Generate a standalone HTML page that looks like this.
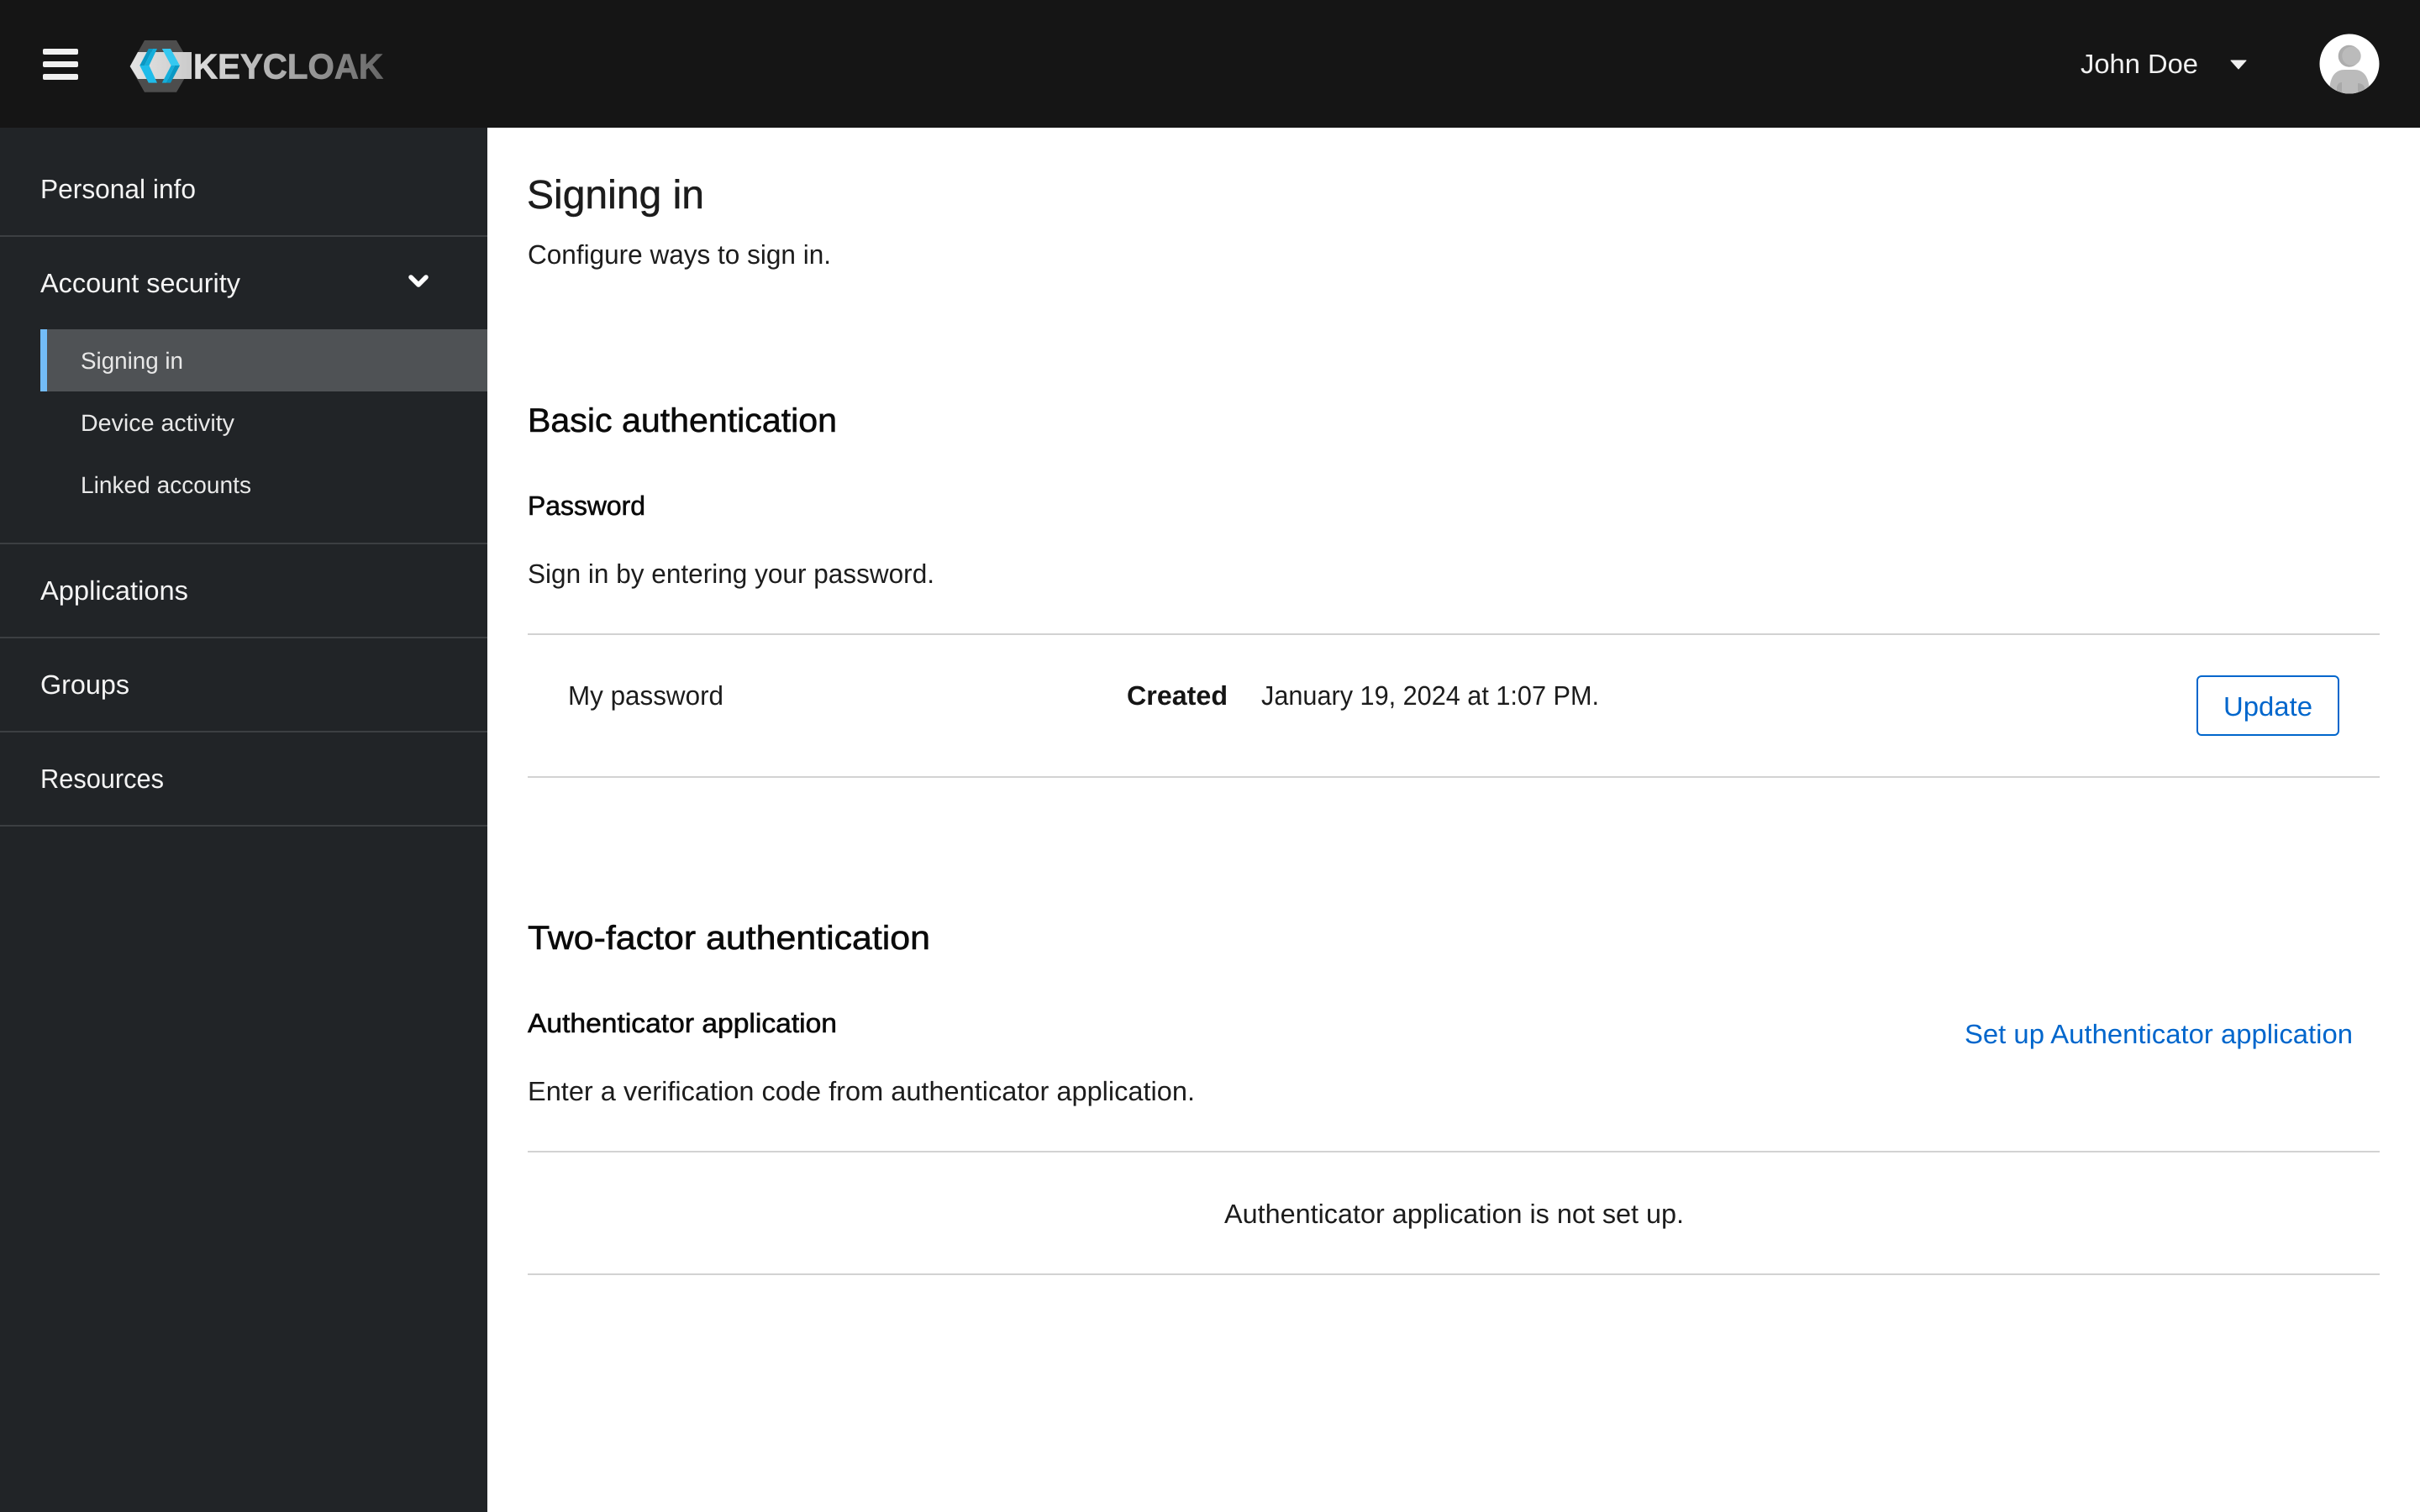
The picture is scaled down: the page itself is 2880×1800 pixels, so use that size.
<!DOCTYPE html>
<html lang="en">
<head>
<meta charset="utf-8">
<title>Signing in</title>
<style>
html,body{margin:0;padding:0;background:#fff;width:2880px;height:1800px;overflow:hidden}
svg{display:block}
text{font-family:"Liberation Sans",Arial,sans-serif;font-size:32px;text-rendering:geometricPrecision}
.n{fill:#f4f4f4}
.s{fill:#e8e8e8;font-size:28px}
.m{fill:#1c1c1c}
.h{fill:#0a0a0a;stroke:#0a0a0a;stroke-width:.6px}
</style>
</head>
<body>
<svg xmlns="http://www.w3.org/2000/svg" width="2880" height="1800" viewBox="0 0 2880 1800">
<defs>
<linearGradient id="kt" x1="230" x2="456" y1="0" y2="0" gradientUnits="userSpaceOnUse">
<stop offset="0" stop-color="#e0e0e0"/><stop offset=".5" stop-color="#a8a8a8"/><stop offset=".8" stop-color="#808080"/><stop offset="1" stop-color="#666666"/>
</linearGradient>
<linearGradient id="band" x1="154" x2="228" y1="0" y2="0" gradientUnits="userSpaceOnUse">
<stop offset="0" stop-color="#e4e4e4"/><stop offset="1" stop-color="#cbcbcb"/>
</linearGradient>
<clipPath id="av"><circle cx="2796" cy="76" r="35.5"/></clipPath>
</defs>

<!-- header -->
<rect x="0" y="0" width="2880" height="152" fill="#151515"/>
<rect x="51" y="58" width="42" height="7" rx="2" fill="#f0f0f0"/>
<rect x="51" y="73" width="42" height="7" rx="2" fill="#f0f0f0"/>
<rect x="51" y="88" width="42" height="7" rx="2" fill="#f0f0f0"/>

<!-- logo -->
<polygon points="154.7,79 172,48 210,48 228,79 210,109.7 172,109.7" fill="#4d4d4d"/>
<polygon points="154.7,79 164,62 228,62 228,94 164,94" fill="url(#band)"/>
<polygon points="166.3,78 176.8,58 182,58 172,78" fill="#0a98c4"/>
<polygon points="172,78 182,58 187,58 177.5,78" fill="#14aedb"/>
<polygon points="166.3,78 177.5,78 187,98.6 176.8,98.6" fill="#1fbcea"/>
<polygon points="214,78 203,58 192.8,58 203.6,78" fill="#35c8f0"/>
<polygon points="214,78 208,78 198,98.6 203,98.6" fill="#0a98c4"/>
<polygon points="208,78 203.6,78 192.8,98.6 198,98.6" fill="#14aedb"/>
<text x="230" y="93.5" font-weight="700" style="font-size:42px;stroke-width:.8px" fill="url(#kt)" stroke="url(#kt)" textLength="226" lengthAdjust="spacingAndGlyphs">KEYCLOAK</text>

<!-- user -->
<text x="2476" y="87" fill="#f0f0f0" textLength="140" lengthAdjust="spacingAndGlyphs">John Doe</text>
<polygon points="2655,72 2673,72 2664,82" fill="#f0f0f0" stroke="#f0f0f0" stroke-width="1" stroke-linejoin="round"/>
<circle cx="2796" cy="76" r="35.5" fill="#ffffff"/>
<g clip-path="url(#av)">
<circle cx="2795.7" cy="66.7" r="13" fill="#adadad"/>
<circle cx="2798.5" cy="66.7" r="11.2" fill="#bbbbbb"/>
<path d="M2771 114L2773 100C2775 89 2781 83 2790 83H2802C2811 83 2817 89 2819 100L2821 114z" fill="#bbbbbb"/>
<path d="M2781 114V104Q2782 98 2787 98V114z" fill="#a8a8a8"/>
<path d="M2806 114V99Q2812 99 2814 104V114z" fill="#a8a8a8"/>
</g>

<!-- sidebar -->
<rect x="0" y="152" width="580" height="1648" fill="#212427"/>
<rect x="0" y="280" width="580" height="2" fill="#3c3f42"/>
<rect x="0" y="646" width="580" height="2" fill="#3c3f42"/>
<rect x="0" y="758" width="580" height="2" fill="#3c3f42"/>
<rect x="0" y="870" width="580" height="2" fill="#3c3f42"/>
<rect x="0" y="982" width="580" height="2" fill="#3c3f42"/>
<text class="n" x="48" y="236" textLength="185" lengthAdjust="spacingAndGlyphs">Personal info</text>
<text class="n" x="48" y="348" textLength="238" lengthAdjust="spacingAndGlyphs">Account security</text>
<path d="M489 330l9 9l9-9" fill="none" stroke="#fff" stroke-width="5.5" stroke-linecap="round" stroke-linejoin="round"/>
<rect x="48" y="392" width="532" height="74" fill="#4f5255"/>
<rect x="48" y="392" width="8" height="74" fill="#73bcf7"/>
<text class="s" x="96" y="439" textLength="122" lengthAdjust="spacingAndGlyphs">Signing in</text>
<text class="s" x="96" y="513" textLength="183" lengthAdjust="spacingAndGlyphs">Device activity</text>
<text class="s" x="96" y="587" textLength="203" lengthAdjust="spacingAndGlyphs">Linked accounts</text>
<text class="n" x="48" y="714" textLength="176" lengthAdjust="spacingAndGlyphs">Applications</text>
<text class="n" x="48" y="826" textLength="106" lengthAdjust="spacingAndGlyphs">Groups</text>
<text class="n" x="48" y="938" textLength="147" lengthAdjust="spacingAndGlyphs">Resources</text>

<!-- main -->
<text class="m" x="627" y="248" style="font-size:48px;stroke:#1c1c1c;stroke-width:.5px" textLength="211" lengthAdjust="spacingAndGlyphs">Signing in</text>
<text class="m" x="628" y="314" textLength="361" lengthAdjust="spacingAndGlyphs">Configure ways to sign in.</text>
<text class="h" x="628" y="514" style="font-size:40px" textLength="368" lengthAdjust="spacingAndGlyphs">Basic authentication</text>
<text class="h" x="628" y="613" textLength="140" lengthAdjust="spacingAndGlyphs">Password</text>
<text class="m" x="628" y="694" textLength="484" lengthAdjust="spacingAndGlyphs">Sign in by entering your password.</text>
<rect x="628" y="754" width="2204" height="2" fill="#d2d2d2"/>
<text class="m" x="676" y="839" textLength="185" lengthAdjust="spacingAndGlyphs">My password</text>
<text x="1341" y="839" font-weight="700" fill="#151515" textLength="120" lengthAdjust="spacingAndGlyphs">Created</text>
<text class="m" x="1501" y="839" textLength="402" lengthAdjust="spacingAndGlyphs">January 19, 2024 at 1:07 PM.</text>
<rect x="2615" y="805" width="168" height="70" rx="5" fill="#fff" stroke="#0066cc" stroke-width="2"/>
<text x="2646" y="852" fill="#0066cc" textLength="106" lengthAdjust="spacingAndGlyphs">Update</text>
<rect x="628" y="924" width="2204" height="2" fill="#d2d2d2"/>

<text class="h" x="628" y="1130" style="font-size:40px" textLength="479" lengthAdjust="spacingAndGlyphs">Two-factor authentication</text>
<text class="h" x="628" y="1229" textLength="368" lengthAdjust="spacingAndGlyphs">Authenticator application</text>
<text class="m" x="628" y="1310" textLength="794" lengthAdjust="spacingAndGlyphs">Enter a verification code from authenticator application.</text>
<text x="2338" y="1242" fill="#0066cc" textLength="462" lengthAdjust="spacingAndGlyphs">Set up Authenticator application</text>
<rect x="628" y="1370" width="2204" height="2" fill="#d2d2d2"/>
<text class="m" x="1457" y="1456" textLength="547" lengthAdjust="spacingAndGlyphs">Authenticator application is not set up.</text>
<rect x="628" y="1516" width="2204" height="2" fill="#d2d2d2"/>
</svg>
</body>
</html>
